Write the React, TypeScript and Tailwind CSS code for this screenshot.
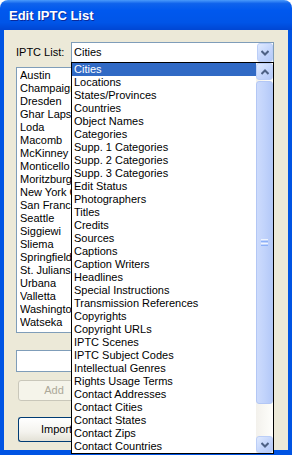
import React from 'react';

const cities = [
  'Austin', 'Champaign', 'Dresden', 'Ghar Lapsi', 'Loda', 'Macomb', 'McKinney', 'Monticello',
  'Moritzburg', 'New York City', 'San Francisco', 'Seattle', 'Siggiewi', 'Sliema', 'Springfield',
  'St. Julians', 'Urbana', 'Valletta', 'Washington', 'Watseka',
];

const listNames = [
  'Cities', 'Locations', 'States/Provinces', 'Countries', 'Object Names', 'Categories',
  'Supp. 1 Categories', 'Supp. 2 Categories', 'Supp. 3 Categories', 'Edit Status', 'Photographers',
  'Titles', 'Credits', 'Sources', 'Captions', 'Caption Writers', 'Headlines', 'Special Instructions',
  'Transmission References', 'Copyrights', 'Copyright URLs', 'IPTC Scenes', 'IPTC Subject Codes',
  'Intellectual Genres', 'Rights Usage Terms', 'Contact Addresses', 'Contact Cities', 'Contact States',
  'Contact Zips', 'Contact Countries',
];

function Chevron({ up }: { up?: boolean }) {
  return (
    <svg width="8" height="6" viewBox="0 0 8 6">
      <path d={up ? 'M0.5 5L4 1.5L7.5 5' : 'M0.5 1L4 4.5L7.5 1'} stroke="#4D6185" strokeWidth="2" fill="none" />
    </svg>
  );
}

function ScrollButton({ up, className = '' }: { up?: boolean; className?: string }) {
  return (
    <div
      className={`flex items-center justify-center rounded-[3px] border border-[#BBCEF7] bg-[linear-gradient(135deg,#E0EAFE_0%,#C6D7FC_50%,#B4C9F8_100%)] ${className}`}
    >
      <Chevron up={up} />
    </div>
  );
}

export default function App() {
  return (
    <div className="relative w-[292px] h-[455px] overflow-hidden bg-white font-['Liberation_Sans',Arial,sans-serif] text-[11px] text-black">
      <div className="flex flex-col w-full h-full rounded-t-[8px] overflow-hidden">
        {/* title bar */}
        <div className="h-[30px] shrink-0 flex items-center pl-[9px] bg-[linear-gradient(180deg,#4A9AFB_0%,#0F63EC_12%,#0058EE_35%,#0055E8_75%,#0046D3_100%)]">
          <span className="text-white font-bold text-[13px] mt-[1px] [text-shadow:1px_1px_#0A2A9C]">Edit IPTC List</span>
        </div>

        {/* client */}
        <div className="flex-1 border-x-4 border-b-[5px] border-[#0054E3] bg-[#ECE9D8] pl-[12px] pt-[12px]">
          <div className="flex items-center h-[21px]">
            <span className="w-[55px]">IPTC List:</span>
            <div className="w-[203px] h-[21px] flex items-center bg-white border border-[#7F9DB9]">
              <span className="flex-1 pl-[2px]">Cities</span>
              <ScrollButton className="w-[16px] h-[19px]" />
            </div>
          </div>

          <div className="mt-[4px] w-[258px] h-[266px] bg-white border border-[#7F9DB9] pt-[1px] pl-[3px]">
            {cities.map((c) => (
              <div key={c} className="w-[52px] h-[13px] leading-[13px] whitespace-nowrap overflow-hidden">{c}</div>
            ))}
          </div>

          <div className="mt-[17px] w-[258px] h-[22px] bg-white border border-[#7F9DB9]" />

          <div className="mt-[8px] ml-[2px] w-[72px] h-[21px] flex items-center justify-center rounded-[3px] border border-[#C9C7BA] bg-[#F5F4EA] text-[#ACA899]">
            Add
          </div>

          <div className="mt-[16px] ml-[2px] w-[53px] h-[25px] flex items-center pl-[22px] whitespace-nowrap overflow-hidden rounded-l-[3px] border border-r-0 border-[#003C74] bg-[linear-gradient(180deg,#FFFFFF_0%,#F4F3EE_60%,#E3E1D6_100%)]">
            Import
          </div>
        </div>
      </div>

      {/* open dropdown list */}
      <div className="absolute left-[71px] top-[62px] w-[203px] h-[392px] flex bg-white border border-black">
        <div className="flex-1">
          {listNames.map((n, i) => (
            <div
              key={n}
              className={`h-[13px] leading-[13px] pl-[2px] whitespace-nowrap overflow-hidden ${i === 0 ? 'bg-[#316AC5] text-white' : ''}`}
            >
              {n}
            </div>
          ))}
        </div>
        <div className="w-[17px] flex flex-col bg-[linear-gradient(90deg,#F3F1EC_0%,#FEFEFB_100%)]">
          <ScrollButton up className="h-[17px]" />
          <div className="flex-1">
            <div className="mt-[1px] h-[323px] flex items-center justify-center rounded-[3px] border border-[#B3C7F5] bg-[linear-gradient(90deg,#CDDBFC_0%,#C1D3FB_50%,#B4C9F8_100%)]">
              <div className="flex flex-col gap-[1px]">
                <div className="w-[7px] h-[1px] bg-[#EEF4FE]" />
                <div className="w-[7px] h-[1px] bg-[#8CB0F8]" />
                <div className="w-[7px] h-[1px] bg-[#EEF4FE]" />
                <div className="w-[7px] h-[1px] bg-[#8CB0F8]" />
              </div>
            </div>
          </div>
          <ScrollButton className="h-[17px]" />
        </div>
      </div>
    </div>
  );
}
